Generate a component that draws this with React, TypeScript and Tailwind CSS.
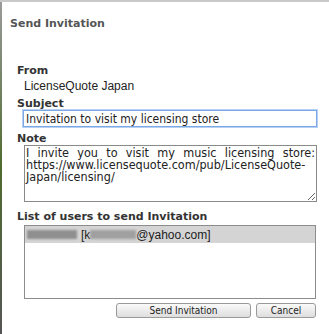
import React from 'react';

const label = 'block text-[11px] leading-[13px] font-bold text-[#333]';

const App = () => {
  return (
    <div className="flex w-[329px] h-[334px] bg-white overflow-hidden border-t-2 border-[#c9c9c9]" style={{ fontFamily: 'Tahoma, "DejaVu Sans", sans-serif' }}>
      {/* strip of the page behind the dialog */}
      <div className="w-[2px] shrink-0 bg-gradient-to-b from-[#9a9a9a] via-[#4f6b2c] to-[#555]" />
      <div className="flex-1 flex flex-col">
        <h2 className="pl-[8px] pt-[15px] text-[11px] leading-[14px] font-bold text-[#555]" style={{ fontFamily: '"DejaVu Sans", Verdana, sans-serif' }}>
          Send Invitation
        </h2>

        <div className="pl-[15px] pr-[10px] pt-[33px] flex flex-col">
          <span className={label} style={{ fontFamily: '"DejaVu Sans", sans-serif' }}>From</span>
          <span className="block pl-[7px] pt-[2px] h-[20px] text-[12px] leading-[15px] text-[#222]" style={{ fontFamily: '"Liberation Sans", Arial, sans-serif' }}>
            LicenseQuote Japan
          </span>
          <span className={label} style={{ fontFamily: '"DejaVu Sans", sans-serif' }}>Subject</span>
          <div className="pl-[6px]">
            <input
              readOnly
              defaultValue="Invitation to visit my licensing store"
              className="block w-[294px] h-[17px] px-[2px] border border-[#7aa7e6] outline outline-1 outline-[#b7d0f3] text-[12px] leading-[15px] text-[#222] bg-white"
              style={{ fontFamily: '"DejaVu Sans Condensed", sans-serif' }}
            />
          </div>
          <span className={`${label} pt-[5px]`} style={{ fontFamily: '"DejaVu Sans", sans-serif' }}>Note</span>
          <div className="pl-[7px]">
            <textarea
              readOnly
              defaultValue="I invite you to visit my music licensing store: https://www.licensequote.com/pub/LicenseQuote-Japan/licensing/"
              className="block w-[293px] h-[57px] px-[1px] pt-[1px] pb-0 border border-[#8a8a8a] text-[12.5px] leading-[12px] text-[#222] text-justify resize-y outline-none"
              style={{ fontFamily: '"DejaVu Sans Condensed", sans-serif' }}
            />
          </div>
          <span className={`${label} pt-[8px]`} style={{ fontFamily: '"DejaVu Sans", sans-serif' }}>List of users to send Invitation</span>
          <div className="ml-[7px] mt-[2px] w-[292px] h-[74px] border border-[#8c8c8c]">
            <div className="flex items-center h-[17px] bg-[#d4d4d4] pl-[2px] text-[12px] text-[#222]" style={{ fontFamily: '"Liberation Sans", Arial, sans-serif' }}>
              <span className="inline-block w-[50px] h-[9px] bg-[#8f8f8f] blur-[1px]" />
              <span className="ml-[4px]">[k</span>
              <span className="inline-block w-[46px] h-[9px] bg-[#a0a0a0] blur-[1px]" />
              <span>@yahoo.com]</span>
            </div>
          </div>
          <div className="flex justify-end gap-[5px] pt-[4px] pr-[3px]" style={{ fontFamily: '"DejaVu Sans Condensed", sans-serif' }}>
            <button className="w-[135px] h-[15px] rounded-[3px] border border-[#9a9a9a] bg-gradient-to-b from-[#fafafa] to-[#dedede] text-[10px] leading-[13px] text-[#222]">
              Send Invitation
            </button>
            <button className="w-[60px] h-[15px] rounded-[3px] border border-[#9a9a9a] bg-gradient-to-b from-[#fafafa] to-[#dedede] text-[10px] leading-[13px] text-[#222]">
              Cancel
            </button>
          </div>
        </div>
      </div>
    </div>
  );
};

export default App;
